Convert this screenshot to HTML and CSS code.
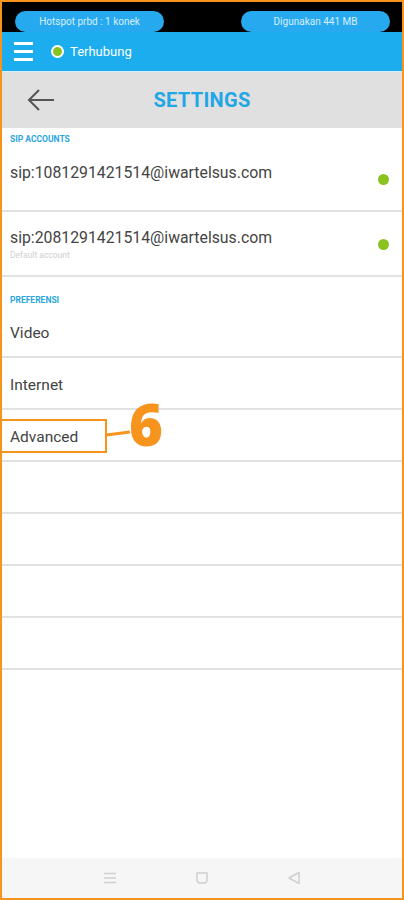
FILE: index.html
```html
<!DOCTYPE html>
<html>
<head>
<meta charset="utf-8">
<link rel="stylesheet" href="styles.css">
</head>
<body>
<div class="frame">
  <div class="status">
    <div class="pill">Hotspot prbd : 1 konek</div>
    <div class="pill">Digunakan 441 MB</div>
  </div>
  <div class="appbar">
    <div class="burger"><span></span><span></span><span></span></div>
    <div class="conn"><span class="ring"></span>Terhubung</div>
  </div>
  <div class="header">
    <svg class="back" width="28" height="22" viewBox="0 0 28 22"><path d="M27 11H2M12 1L2 11l10 10" fill="none" stroke="#555" stroke-width="2"/></svg>
    <div class="title">SETTINGS</div>
  </div>
  <div class="content">
    <div class="sect first">SIP ACCOUNTS</div>
    <div class="sip">
      <div class="txt"><div class="main">sip:1081291421514@iwartelsus.com</div><div class="sub"></div></div>
      <span class="dot"></span>
    </div>
    <div class="sip has-sub">
      <div class="txt"><div class="main">sip:2081291421514@iwartelsus.com</div><div class="sub">Default account</div></div>
      <span class="dot"></span>
    </div>
    <div class="sect">PREFERENSI</div>
    <div class="row">Video</div>
    <div class="row">Internet</div>
    <div class="row adv">Advanced
      <div class="callout"><span class="box"></span><span class="line"></span><span class="num">6</span></div>
    </div>
    <div class="row"></div>
    <div class="row"></div>
    <div class="row"></div>
    <div class="row"></div>
  </div>
  <div class="nav">
    <svg width="14" height="12" viewBox="0 0 14 12"><path d="M1 1.5h12M1 6h12M1 10.5h12" stroke="#d0d0d0" stroke-width="1.5"/></svg>
    <svg width="14" height="14" viewBox="0 0 14 14"><path d="M2 2h10v7a3 3 0 0 1-3 3H5a3 3 0 0 1-3-3z" fill="none" stroke="#d0d0d0" stroke-width="1.5"/></svg>
    <svg width="14" height="14" viewBox="0 0 14 14"><path d="M12 1.5L2 7l10 5.5z" fill="none" stroke="#d0d0d0" stroke-width="1.5" stroke-linejoin="round"/></svg>
  </div>
</div>
</body>
</html>
```
FILE: styles.css
```css
* { box-sizing: border-box; }
html, body { margin: 0; padding: 0; background: #fff; }
body { font-family: Roboto, "Liberation Sans", sans-serif; }
.frame {
  width: 404px; height: 900px;
  border: 2px solid #f7941d;
  display: flex; flex-direction: column;
  overflow: hidden;
  position: relative;
}
.status {
  height: 30px; background: #000;
  display: flex; justify-content: space-between; align-items: flex-end;
  padding: 0 12px 0 13px;
}
.pill {
  height: 21px; width: 149px;
  background: #27a9ef;
  border-radius: 11px;
  color: #d6efff; font-size: 10px;
  display: flex; align-items: center; justify-content: center;
  padding-bottom: 1px;
}
.appbar {
  height: 39px; background: #1cadef;
  display: flex; align-items: center;
  padding-left: 12px;
}
.burger { width: 19px; display: flex; flex-direction: column; gap: 5.5px; }
.burger span { display: block; height: 2.5px; background: #fff; }
.conn { display: flex; align-items: center; color: #fff; font-size: 13px; margin-left: 18px; }
.ring {
  width: 13px; height: 13px; border-radius: 50%;
  background: #8cc21f; border: 2px solid #fff;
  margin-right: 6px;
}
.header {
  height: 57px; background: #e0e0e0;
  display: flex; align-items: center; position: relative;
  border-top: 1px solid #d8eef9;
}
.back { margin-left: 25px; }
.title {
  position: absolute; left: 0; right: 0; text-align: center;
  color: #21a7e6; font-weight: 700; font-size: 20px; letter-spacing: 0.3px;
}
.content { flex: 1; background: #fff; }
.sect {
  color: #2aa6de; font-size: 8.5px; font-weight: 700;
  padding: 18px 8px 1px; line-height: 10px;
}
.sect.first { padding-top: 6px; padding-bottom: 6px; }
.sip {
  display: flex; align-items: center;
  padding: 10px 13px 12px 8px;
  border-bottom: 2px solid #e2e2e2;
  height: 62px;
}
.sip.has-sub { height: 65px; padding-top: 15px; padding-bottom: 12px; align-items: flex-start; }
.sip.has-sub .dot { margin-top: 12px; }
.txt { flex: 1; }
.main { font-size: 15.8px; color: #444; line-height: 22px; }
.sub { font-size: 8.5px; color: #cfcfcf; line-height: 13px; height: 13px; }
.dot { width: 11px; height: 11px; border-radius: 50%; background: #8cc21f; }
.row {
  height: 52px; border-bottom: 2px solid #e2e2e2;
  display: flex; align-items: center;
  padding-left: 8px; padding-top: 4px;
  font-size: 15.5px; color: #444;
}
.adv { position: relative; }
.callout { position: absolute; left: -2px; top: 6px; width: 180px; height: 44px; }
.box {
  position: absolute; left: 0; top: 3px; width: 107px; height: 34px;
  border: 2px solid #f7941d;
}
.line {
  position: absolute; left: 106px; top: 16px; width: 24px; height: 2.5px;
  background: #f7941d; transform: rotate(-7deg);
}
.num {
  position: absolute; left: 129px; top: -32px;
  font-family: "Open Sans", "Liberation Sans", sans-serif;
  font-size: 58px; font-weight: 800; color: #f7941d; line-height: 80px;
}
.nav {
  height: 40px; background: #f6f6f6;
  display: flex; align-items: center; justify-content: center; gap: 78px;
}
```
